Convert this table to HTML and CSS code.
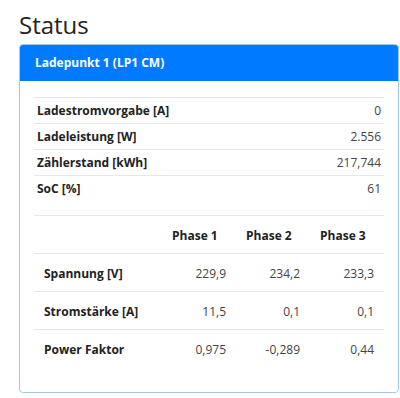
FILE: index.html
```html
<!DOCTYPE html>
<html lang="de">
<head>
<meta charset="utf-8">
<title>Status</title>
<link rel="stylesheet" href="styles.css">
</head>
<body>
<main class="page">
  <h1 class="page-title">Status</h1>
  <section class="card">
    <header class="card-header">Ladepunkt 1 (LP1 CM)</header>
    <div class="card-body">
      <table class="kv-table">
        <tbody>
          <tr><th>Ladestromvorgabe [A]</th><td>0</td></tr>
          <tr><th>Ladeleistung [W]</th><td>2.556</td></tr>
          <tr><th>Zählerstand [kWh]</th><td>217,744</td></tr>
          <tr><th>SoC [%]</th><td>61</td></tr>
        </tbody>
      </table>
      <table class="phase-table">
        <colgroup>
          <col class="col-label">
          <col class="col-phase">
          <col class="col-phase">
          <col class="col-phase">
        </colgroup>
        <thead>
          <tr><th></th><th>Phase 1</th><th>Phase 2</th><th>Phase 3</th></tr>
        </thead>
        <tbody>
          <tr><th>Spannung [V]</th><td>229,9</td><td>234,2</td><td>233,3</td></tr>
          <tr><th>Stromstärke [A]</th><td>11,5</td><td>0,1</td><td>0,1</td></tr>
          <tr><th>Power Faktor</th><td>0,975</td><td>-0,289</td><td>0,44</td></tr>
        </tbody>
      </table>
    </div>
  </section>
</main>
</body>
</html>
```

FILE: styles.css
```css
* { box-sizing: border-box; }

body {
  margin: 0;
  background: #fff;
  color: #212529;
  font-family: "Open Sans", "Noto Sans", sans-serif;
}

.page {
  padding: 10px 1px 0 19px;
}

.page-title {
  margin: 0 0 5px;
  font-size: 24px;
  font-weight: 400;
  line-height: 29px;
  color: #222;
}

.card {
  border: 1px solid #a3c8e6;
  border-radius: 4px;
  overflow: hidden;
}

.card-header {
  height: 37px;
  margin: -1px -1px 0;
  padding: 0 16px;
  background: #007bff;
  color: #fff;
  font-size: 12px;
  font-weight: 700;
  line-height: 37px;
  border-radius: 4px 4px 0 0;
}

.card-body {
  padding: 16px 14px 25px;
}

table {
  width: 100%;
  border-collapse: collapse;
  font-size: 12px;
}

th { font-weight: 700; text-align: left; color: #222; }
td { color: #444; text-align: right; }

.kv-table { margin-bottom: 14px; }

.kv-table th,
.kv-table td {
  padding: 3px 3px;
  line-height: 19px;
  border-top: 1px solid #e6e8ea;
}

.phase-table .col-label { width: 128px; }
.phase-table .col-phase { width: 74px; }

.phase-table th,
.phase-table td {
  padding: 10px 10px 8px;
  line-height: 19px;
  border-top: 1px solid #e6e8ea;
}
```
